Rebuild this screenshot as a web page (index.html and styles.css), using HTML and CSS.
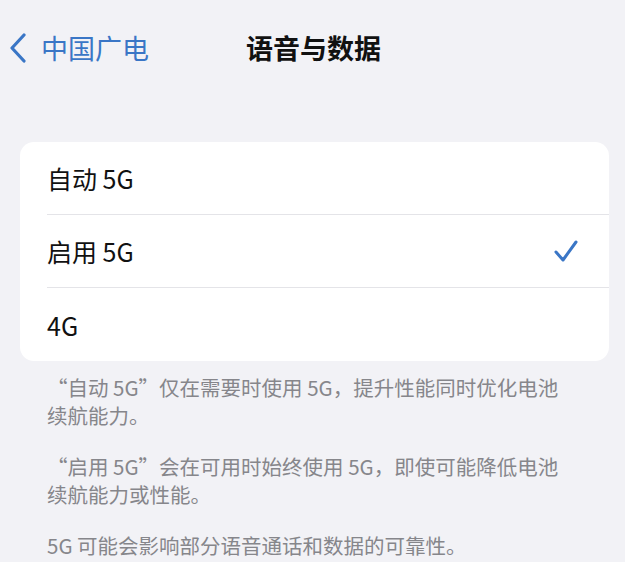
FILE: index.html
```
<!DOCTYPE html>
<html lang="zh-CN">
<head>
<meta charset="utf-8">
<link rel="stylesheet" href="styles.css">
</head>
<body>
<div class="page">
  <header class="nav">
    <a class="back" href="#">
      <svg class="chev" width="18" height="30" viewBox="0 0 18 30"><path d="M15 2 L3 15 L15 28" fill="none" stroke="currentColor" stroke-width="3.2" stroke-linecap="round" stroke-linejoin="round"/></svg>
      <span>中国广电</span>
    </a>
    <h1 class="title">语音与数据</h1>
  </header>

  <ul class="list">
    <li class="row"><span>自动 5G</span></li>
    <li class="row"><span>启用 5G</span>
      <svg class="check" width="26" height="24" viewBox="0 0 26 24"><path d="M3 13 L10 21 L23 3" fill="none" stroke="currentColor" stroke-width="3" stroke-linecap="round" stroke-linejoin="round"/></svg>
    </li>
    <li class="row"><span>4G</span></li>
  </ul>

  <div class="footer">
    <p>“自动 5G”仅在需要时使用 5G，提升性能同时优化电池续航能力。</p>
    <p>“启用 5G”会在可用时始终使用 5G，即使可能降低电池续航能力或性能。</p>
    <p>5G 可能会影响部分语音通话和数据的可靠性。</p>
  </div>
</div>
</body>
</html>
```
FILE: styles.css
```
html, body {
  margin: 0;
  padding: 0;
  background: #f2f2f6;
}
body {
  font-family: "Noto Sans CJK SC", "Noto Sans", sans-serif;
  width: 625px;
  height: 562px;
  overflow: hidden;
}
.page {
  display: flex;
  flex-direction: column;
}
.nav {
  position: relative;
  height: 96px;
  display: flex;
  align-items: flex-start;
  padding-top: 30px;
  box-sizing: border-box;
}
.back {
  display: flex;
  align-items: center;
  gap: 14px;
  padding-left: 9px;
  color: #3a76c6;
  text-decoration: none;
  font-size: 27px;
  line-height: 36px;
}
.chev {
  display: block;
}
.title {
  position: absolute;
  left: 0;
  right: 0;
  top: 30px;
  margin: 0;
  text-align: center;
  font-size: 27px;
  line-height: 36px;
  font-weight: 700;
  color: #111;
  padding-left: 2px;
}
.list {
  list-style: none;
  margin: 46px 16px 0 20px;
  padding: 0;
  background: #fff;
  border-radius: 14px;
  overflow: hidden;
}
.row {
  height: 73px;
  display: flex;
  align-items: center;
  justify-content: space-between;
  margin-left: 27px;
  padding-right: 30px;
  font-size: 25px;
  color: #111;
  border-bottom: 1.5px solid #e4e4e8;
  box-sizing: border-box;
}
.row:last-child {
  border-bottom: none;
}
.check {
  color: #3a76c6;
  display: block;
}
.footer {
  padding: 13px 58px 0 47px;
  color: #86868b;
  font-size: 20.5px;
  line-height: 27.5px;
}
.footer p {
  margin: 0 0 24px 0;
}
```
